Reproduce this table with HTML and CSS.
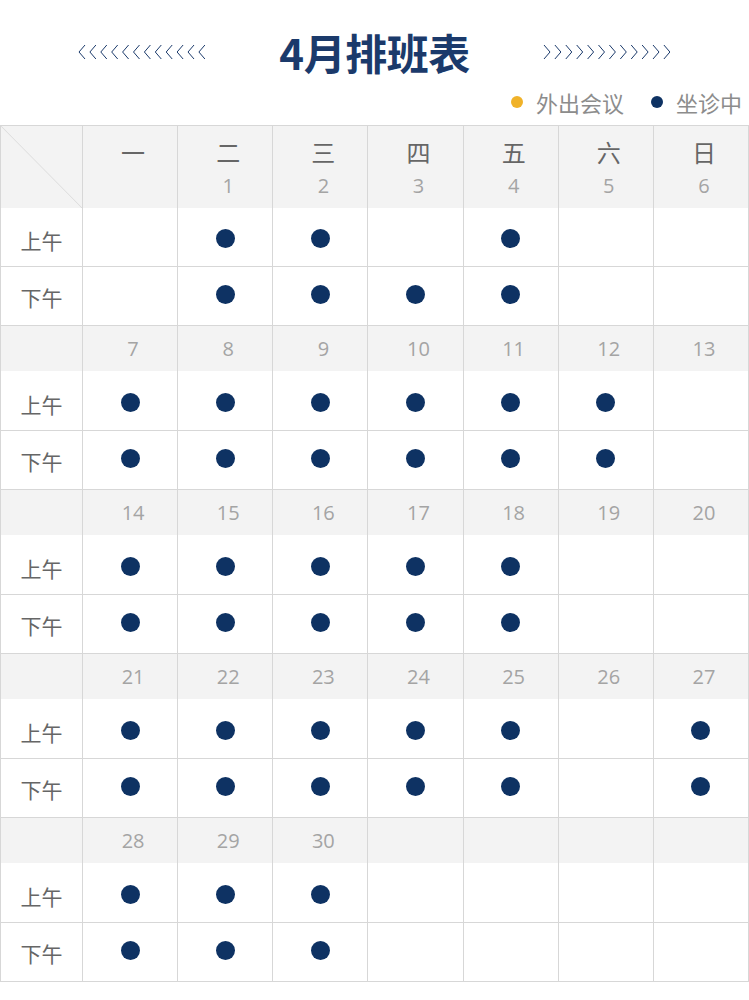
FILE: index.html
```html
<!DOCTYPE html>
<html lang="zh-CN">
<head>
<meta charset="utf-8">
<title>4月排班表</title>
<link rel="stylesheet" href="styles.css">
</head>
<body>
<div class="page">
  <div class="title-row">
    <svg class="chev" width="128" height="16" viewBox="0 0 128 16" aria-hidden="true">
      <g fill="none" stroke="#1b3a6b" stroke-width="1">
        <polyline points="7,1 1,8 7,15"/><polyline points="17.9,1 11.9,8 17.9,15"/><polyline points="28.8,1 22.8,8 28.8,15"/><polyline points="39.7,1 33.7,8 39.7,15"/><polyline points="50.6,1 44.6,8 50.6,15"/><polyline points="61.5,1 55.5,8 61.5,15"/><polyline points="72.4,1 66.4,8 72.4,15"/><polyline points="83.3,1 77.3,8 83.3,15"/><polyline points="94.2,1 88.2,8 94.2,15"/><polyline points="105.1,1 99.1,8 105.1,15"/><polyline points="116,1 110,8 116,15"/><polyline points="126.9,1 120.9,8 126.9,15"/>
      </g>
    </svg>
    <h1 class="title">4月排班表</h1>
    <svg class="chev" width="128" height="16" viewBox="0 0 128 16" aria-hidden="true">
      <g fill="none" stroke="#1b3a6b" stroke-width="1">
        <polyline points="1,1 7,8 1,15"/><polyline points="11.9,1 17.9,8 11.9,15"/><polyline points="22.8,1 28.8,8 22.8,15"/><polyline points="33.7,1 39.7,8 33.7,15"/><polyline points="44.6,1 50.6,8 44.6,15"/><polyline points="55.5,1 61.5,8 55.5,15"/><polyline points="66.4,1 72.4,8 66.4,15"/><polyline points="77.3,1 83.3,8 77.3,15"/><polyline points="88.2,1 94.2,8 88.2,15"/><polyline points="99.1,1 105.1,8 99.1,15"/><polyline points="110,1 116,8 110,15"/><polyline points="120.9,1 126.9,8 120.9,15"/>
      </g>
    </svg>
  </div>

  <div class="legend">
    <span class="leg-item"><i class="ldot out"></i>外出会议</span>
    <span class="leg-item"><i class="ldot in"></i>坐诊中</span>
  </div>

  <div class="table">
    <div class="row head">
      <div class="c corner"></div>
      <div class="c"><span class="wd">一</span><span class="num"></span></div>
      <div class="c"><span class="wd">二</span><span class="num">1</span></div>
      <div class="c"><span class="wd">三</span><span class="num">2</span></div>
      <div class="c"><span class="wd">四</span><span class="num">3</span></div>
      <div class="c"><span class="wd">五</span><span class="num">4</span></div>
      <div class="c"><span class="wd">六</span><span class="num">5</span></div>
      <div class="c"><span class="wd">日</span><span class="num">6</span></div>
    </div>
    <div class="row am first">
      <div class="c lab">上午</div>
      <div class="c"></div>
      <div class="c"><i class="dot"></i></div>
      <div class="c"><i class="dot"></i></div>
      <div class="c"></div>
      <div class="c"><i class="dot"></i></div>
      <div class="c"></div>
      <div class="c"></div>
    </div>
    <div class="row pm">
      <div class="c lab">下午</div>
      <div class="c"></div>
      <div class="c"><i class="dot"></i></div>
      <div class="c"><i class="dot"></i></div>
      <div class="c"><i class="dot"></i></div>
      <div class="c"><i class="dot"></i></div>
      <div class="c"></div>
      <div class="c"></div>
    </div>

    <div class="row date">
      <div class="c blank"></div>
      <div class="c num">7</div><div class="c num">8</div><div class="c num">9</div><div class="c num">10</div><div class="c num">11</div><div class="c num">12</div><div class="c num">13</div>
    </div>
    <div class="row am">
      <div class="c lab">上午</div>
      <div class="c"><i class="dot"></i></div><div class="c"><i class="dot"></i></div><div class="c"><i class="dot"></i></div><div class="c"><i class="dot"></i></div><div class="c"><i class="dot"></i></div><div class="c"><i class="dot"></i></div><div class="c"></div>
    </div>
    <div class="row pm">
      <div class="c lab">下午</div>
      <div class="c"><i class="dot"></i></div><div class="c"><i class="dot"></i></div><div class="c"><i class="dot"></i></div><div class="c"><i class="dot"></i></div><div class="c"><i class="dot"></i></div><div class="c"><i class="dot"></i></div><div class="c"></div>
    </div>

    <div class="row date">
      <div class="c blank"></div>
      <div class="c num">14</div><div class="c num">15</div><div class="c num">16</div><div class="c num">17</div><div class="c num">18</div><div class="c num">19</div><div class="c num">20</div>
    </div>
    <div class="row am">
      <div class="c lab">上午</div>
      <div class="c"><i class="dot"></i></div><div class="c"><i class="dot"></i></div><div class="c"><i class="dot"></i></div><div class="c"><i class="dot"></i></div><div class="c"><i class="dot"></i></div><div class="c"></div><div class="c"></div>
    </div>
    <div class="row pm">
      <div class="c lab">下午</div>
      <div class="c"><i class="dot"></i></div><div class="c"><i class="dot"></i></div><div class="c"><i class="dot"></i></div><div class="c"><i class="dot"></i></div><div class="c"><i class="dot"></i></div><div class="c"></div><div class="c"></div>
    </div>

    <div class="row date">
      <div class="c blank"></div>
      <div class="c num">21</div><div class="c num">22</div><div class="c num">23</div><div class="c num">24</div><div class="c num">25</div><div class="c num">26</div><div class="c num">27</div>
    </div>
    <div class="row am">
      <div class="c lab">上午</div>
      <div class="c"><i class="dot"></i></div><div class="c"><i class="dot"></i></div><div class="c"><i class="dot"></i></div><div class="c"><i class="dot"></i></div><div class="c"><i class="dot"></i></div><div class="c"></div><div class="c"><i class="dot"></i></div>
    </div>
    <div class="row pm">
      <div class="c lab">下午</div>
      <div class="c"><i class="dot"></i></div><div class="c"><i class="dot"></i></div><div class="c"><i class="dot"></i></div><div class="c"><i class="dot"></i></div><div class="c"><i class="dot"></i></div><div class="c"></div><div class="c"><i class="dot"></i></div>
    </div>

    <div class="row date">
      <div class="c blank"></div>
      <div class="c num">28</div><div class="c num">29</div><div class="c num">30</div><div class="c num"></div><div class="c num"></div><div class="c num"></div><div class="c num"></div>
    </div>
    <div class="row am">
      <div class="c lab">上午</div>
      <div class="c"><i class="dot"></i></div><div class="c"><i class="dot"></i></div><div class="c"><i class="dot"></i></div><div class="c"></div><div class="c"></div><div class="c"></div><div class="c"></div>
    </div>
    <div class="row pm">
      <div class="c lab">下午</div>
      <div class="c"><i class="dot"></i></div><div class="c"><i class="dot"></i></div><div class="c"><i class="dot"></i></div><div class="c"></div><div class="c"></div><div class="c"></div><div class="c"></div>
    </div>
  </div>
</div>
</body>
</html>
```

FILE: styles.css
```css
* { box-sizing: border-box; }

html, body {
  margin: 0;
  padding: 0;
  background: #ffffff;
}

body {
  font-family: "Open Sans", "Noto Sans CJK SC", sans-serif;
  color: #666666;
}

.page {
  width: 749px;
}

.title-row {
  height: 84px;
  padding-top: 20px;
  display: flex;
  align-items: center;
  justify-content: center;
  gap: 73px;
}

.chev {
  display: block;
  flex: none;
}

.title {
  margin: 0;
  font-family: "Noto Sans CJK SC", sans-serif;
  font-weight: 700;
  font-size: 42px;
  line-height: 46px;
  color: #1b3a6b;
  letter-spacing: -0.5px;
}

.legend {
  height: 36px;
  display: flex;
  align-items: center;
  justify-content: flex-end;
  gap: 27px;
  padding-right: 7px;
  margin-bottom: 5px;
}

.leg-item {
  display: flex;
  align-items: center;
  gap: 13px;
  font-family: "Noto Sans CJK SC", sans-serif;
  font-size: 22px;
  line-height: 30px;
  color: #8c8c8c;
}

.ldot {
  display: block;
  width: 12px;
  height: 12px;
  border-radius: 50%;
}

.ldot.out { background: #f0b229; }
.ldot.in { background: #0e3263; }

.table {
  width: 749px;
  border-top: 1px solid #d7d7d7;
  border-left: 1px solid #d7d7d7;
}

.row {
  display: grid;
  grid-template-columns: 82px repeat(7, 1fr);
}

.c {
  border-right: 1px solid #d7d7d7;
  display: flex;
  align-items: center;
  justify-content: center;
}

.row.head { height: 82px; background: #f3f3f3; }
.row.date { height: 45px; background: #f3f3f3; }
.row.am { height: 60px; }
.row.am.first { height: 59px; }
.row.pm { height: 59px; }

.row.am .c,
.row.pm .c {
  border-bottom: 1px solid #d7d7d7;
}

.row.head .c {
  flex-direction: column;
  justify-content: flex-start;
  padding-top: 11px;
  padding-left: 6px;
}

.row.head .c.corner {
  padding: 0;
  background: linear-gradient(to top right, transparent calc(50% - 0.8px), #dedede 50%, transparent calc(50% + 0.8px));
}

.wd {
  font-family: "Noto Sans CJK SC", sans-serif;
  font-size: 24px;
  line-height: 30px;
  color: #666666;
}

.num {
  font-family: "Open Sans", sans-serif;
  font-size: 20px;
  color: #a4a4a4;
}

.row.head .num {
  line-height: 38px;
  height: 38px;
}

.row.date .num {
  line-height: 45px;
  padding-left: 6px;
  padding-bottom: 1px;
}

.lab {
  font-family: "Noto Sans CJK SC", sans-serif;
  font-size: 21px;
  color: #666666;
}

.row.am .lab { padding-top: 6px; }
.row.pm .lab { padding-top: 1px; }

.dot {
  display: block;
  width: 19px;
  height: 19px;
  border-radius: 50%;
  background: #0e3263;
}

.row.am .dot { margin-top: 3px; }
.row.pm .dot { margin-bottom: 3px; }
```
